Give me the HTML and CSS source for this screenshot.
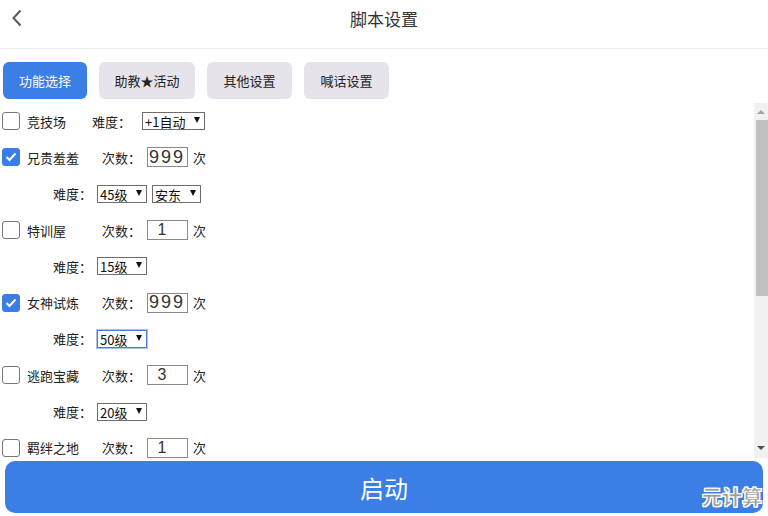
FILE: index.html
```html
<!DOCTYPE html>
<html lang="zh-CN">
  <head>
    <meta charset="UTF-8" />
    <meta name="viewport" content="width=device-width, initial-scale=1.0" />
    <title>脚本设置</title>
    <link rel="stylesheet" href="styles.css">
  </head>
  <body>
    <div class="app">
      <header class="topbar">
        <a class="back" href="#">
          <svg width="12" height="18" viewBox="0 0 12 18">
            <polyline points="9.5,1.5 2.5,9 9.5,16.5" fill="none" stroke="#5a5a5a" stroke-width="2" />
          </svg>
        </a>
        <h1 class="title">脚本设置</h1>
        <span></span>
      </header>

      <nav class="tabs">
        <a class="tab active" href="#">功能选择</a>
        <a class="tab tab-wide" href="#">助教★活动</a>
        <a class="tab" href="#">其他设置</a>
        <a class="tab" href="#">喊话设置</a>
      </nav>

      <section class="panel">
        <div class="options">
          <div class="row">
            <span class="box"></span>
            <span class="name short">竞技场</span>
            <span class="lbl">难度：</span>
            <span class="select first" style="width: 63px"><span>+1自动</span><i></i></span>
          </div>

          <div class="row">
            <span class="box checked"><svg width="12" height="10" viewBox="0 0 12 10"><polyline points="1.5,5 4.5,8 10.5,1.5" fill="none" stroke="#fff" stroke-width="2" /></svg></span>
            <span class="name">兄贵羞羞</span>
            <span class="lbl">次数：</span>
            <input class="count wide" type="text" value="999" />
            <span class="unit">次</span>
          </div>
          <div class="row sub">
            <span class="lbl">难度：</span>
            <span class="select" style="width: 50px"><span>45级</span><i></i></span>
            <span class="select" style="width: 49px"><span>安东</span><i></i></span>
          </div>

          <div class="row">
            <span class="box"></span>
            <span class="name">特训屋</span>
            <span class="lbl">次数：</span>
            <input class="count" type="text" value="1" />
            <span class="unit">次</span>
          </div>
          <div class="row sub">
            <span class="lbl">难度：</span>
            <span class="select" style="width: 50px"><span>15级</span><i></i></span>
          </div>

          <div class="row">
            <span class="box checked"><svg width="12" height="10" viewBox="0 0 12 10"><polyline points="1.5,5 4.5,8 10.5,1.5" fill="none" stroke="#fff" stroke-width="2" /></svg></span>
            <span class="name">女神试炼</span>
            <span class="lbl">次数：</span>
            <input class="count wide" type="text" value="999" />
            <span class="unit">次</span>
          </div>
          <div class="row sub">
            <span class="lbl">难度：</span>
            <span class="select focus" style="width: 50px"><span>50级</span><i></i></span>
          </div>

          <div class="row">
            <span class="box"></span>
            <span class="name">逃跑宝藏</span>
            <span class="lbl">次数：</span>
            <input class="count" type="text" value="3" />
            <span class="unit">次</span>
          </div>
          <div class="row sub">
            <span class="lbl">难度：</span>
            <span class="select" style="width: 50px"><span>20级</span><i></i></span>
          </div>

          <div class="row">
            <span class="box"></span>
            <span class="name">羁绊之地</span>
            <span class="lbl">次数：</span>
            <input class="count" type="text" value="1" />
            <span class="unit">次</span>
          </div>
        </div>

        <div class="scrollbar">
          <span class="arrow up"></span>
          <span class="thumb"></span>
          <span class="track"></span>
          <span class="arrow down"></span>
        </div>
      </section>

      <footer class="footer">
        <button class="start">启动</button>
        <span class="watermark">元计算</span>
      </footer>
    </div>
  </body>
</html>
```

FILE: styles.css
```css
body {
  margin: 0;
  background-color: #fff;
  font-family: "Microsoft YaHei", "Noto Sans CJK SC", "Noto Sans", sans-serif;
  color: #222;
}

.app {
  height: 516px;
  display: flex;
  flex-direction: column;
  overflow: hidden;
}

/* header */
.topbar {
  height: 36px;
  padding-bottom: 12px;
  border-bottom: 1px solid #ececec;
  display: grid;
  grid-template-columns: 1fr auto 1fr;
  align-items: center;
}

.back {
  display: flex;
  padding-left: 11px;
}

.title {
  margin: 0;
  font-size: 17px;
  font-weight: normal;
  color: #333;
}

/* tabs */
.tabs {
  display: flex;
  gap: 12px;
  margin-top: 13px;
  padding-left: 3px;
}

.tab {
  width: 85px;
  height: 37px;
  border-radius: 6px;
  background-color: #e6e4ea;
  color: #222;
  font-size: 13px;
  text-decoration: none;
  display: flex;
  align-items: center;
  justify-content: center;
}

.tab.active {
  width: 84px;
  background-color: #3a7ee6;
  color: #fff;
}

.tab.tab-wide {
  width: 96px;
}

/* options list */
.panel {
  margin-top: 4px;
  height: 355px;
  display: flex;
}

.options {
  flex: 1;
  overflow: hidden;
  font-size: 13px;
  color: #222;
}

.row {
  height: 36.3px;
  display: flex;
  align-items: center;
  padding-left: 2px;
  white-space: nowrap;
}

.row > * {
  flex-shrink: 0;
}

.row.sub {
  padding-left: 53px;
}

.box {
  width: 18px;
  height: 18px;
  box-sizing: border-box;
  border: 1px solid #777;
  border-radius: 3px;
  display: flex;
  align-items: center;
  justify-content: center;
}

.box.checked {
  background-color: #3b7de6;
  border-color: #3b7de6;
}

.name {
  width: 75px;
  margin-left: 7px;
}

.name.short {
  width: 65px;
}

.lbl {
  width: 39px;
}

.select {
  height: 18px;
  box-sizing: border-box;
  border: 1px solid #6d6d6d;
  margin-left: 5px;
  padding: 0 4px 0 2px;
  display: flex;
  align-items: center;
  justify-content: space-between;
  font-size: 13px;
  line-height: 16px;
  color: #111;
}

.select span {
  padding-top: 2px;
}

.select.first {
  margin-left: 11px;
}

.select.focus {
  border-color: #4a7fd0;
  box-shadow: 0 0 0 1px #a9c2ec;
}

.select i {
  width: 0;
  height: 0;
  border-left: 3px solid transparent;
  border-right: 3px solid transparent;
  border-top: 6px solid #111;
  margin-bottom: 2px;
}

.count {
  width: 41px;
  height: 20px;
  box-sizing: border-box;
  margin: 0 0 0 6px;
  padding: 0 12px 0 1px;
  border: 1px solid #8a8a8a;
  border-radius: 0;
  font-family: "Liberation Sans", sans-serif;
  font-size: 16px;
  color: #333;
  text-align: center;
  outline: none;
}

.count.wide {
  padding-right: 0;
  text-align: left;
  font-size: 18px;
  letter-spacing: 2px;
}

.unit {
  margin-left: 5px;
}

/* scrollbar */
.scrollbar {
  width: 14px;
  background-color: #f1f1f1;
  display: flex;
  flex-direction: column;
  align-items: center;
}

.arrow {
  width: 0;
  height: 0;
  border-left: 4px solid transparent;
  border-right: 4px solid transparent;
}

.arrow.up {
  border-bottom: 4px solid #a3a3a3;
  margin: 7px 0 6px;
}

.arrow.down {
  border-top: 4px solid #505050;
  margin: 6px 0 8px;
}

.thumb {
  width: 12px;
  height: 176px;
  background-color: #c1c1c1;
  margin-left: 2px;
}

.track {
  flex: 1;
}

/* footer */
.footer {
  position: relative;
  padding: 3px 5px;
}

.start {
  width: 100%;
  height: 52px;
  border: none;
  border-radius: 10px;
  background-color: #3a7ee6;
  color: #fff;
  font-family: "Microsoft YaHei", "Noto Sans CJK SC", sans-serif;
  font-size: 24px;
}

.watermark {
  position: absolute;
  right: 6px;
  bottom: 5px;
  font-size: 20px;
  font-weight: bold;
  color: #9a9a9a;
  -webkit-text-stroke: 0.6px #fff;
  text-shadow: 1px 1px 0 #fff, -1px -1px 0 #fff, 1px -1px 0 #fff, -1px 1px 0 #fff;
  font-family: "Noto Sans CJK SC", sans-serif;
}
```
